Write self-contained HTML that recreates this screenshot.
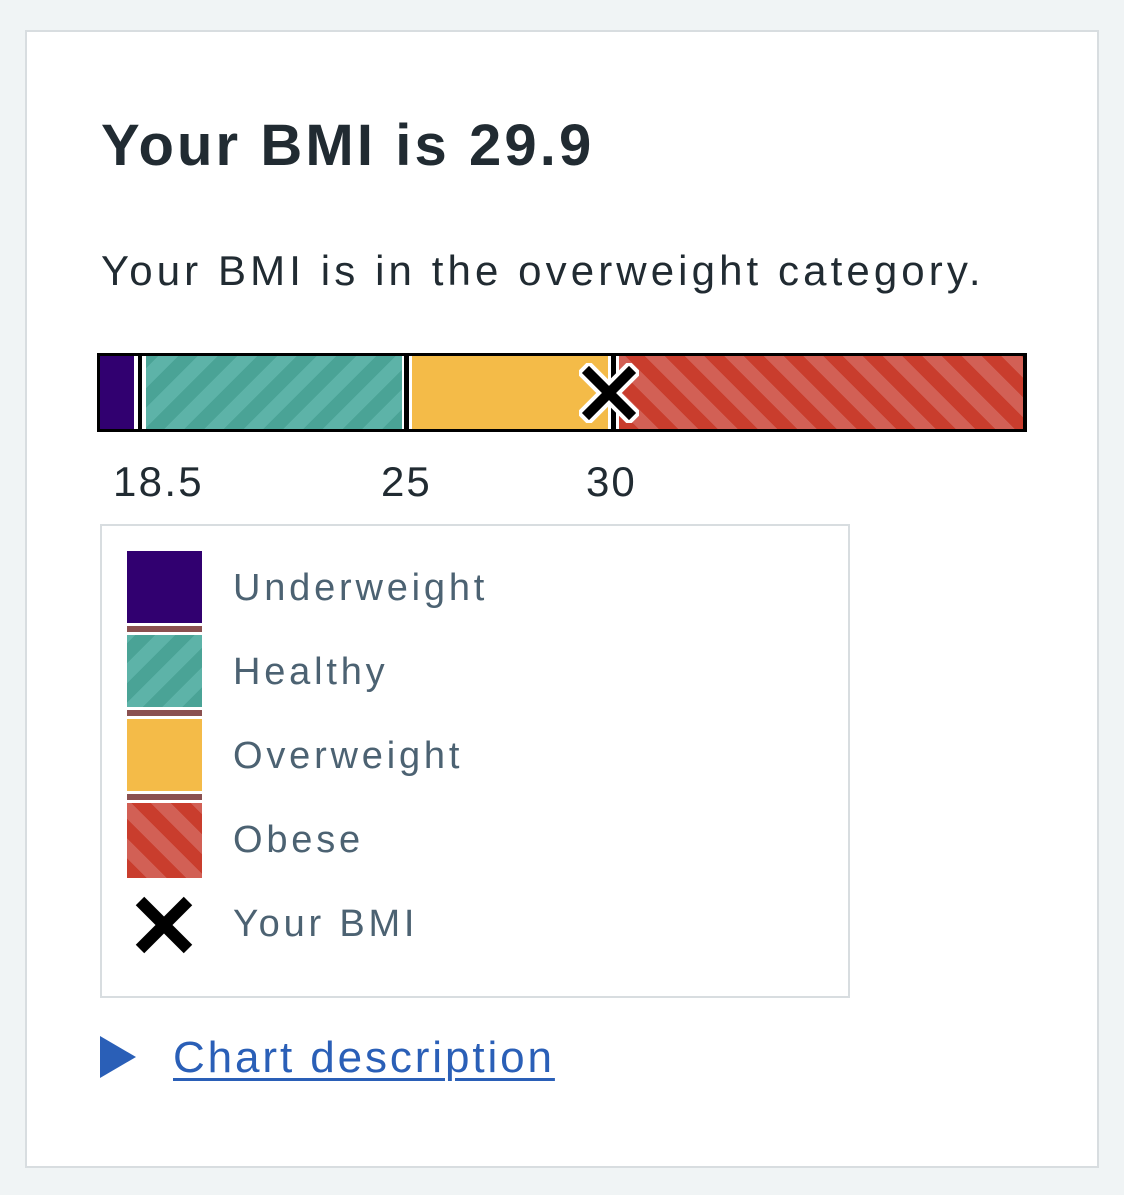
<!DOCTYPE html>
<html><head><meta charset="utf-8"><style>
body{margin:0;width:1124px;height:1195px;background:#f0f4f5;position:relative;font-family:"Liberation Sans",sans-serif;overflow:hidden}
.card{position:absolute;left:25px;top:30px;width:1070px;height:1134px;background:#fff;border:2px solid #d8dde0}
.a{position:absolute}
.teal{background:repeating-linear-gradient(-45deg,#4aa396 0 14px,#5db3a8 14px 28px)}
.red{background:repeating-linear-gradient(45deg,#c93d2d 0 14px,#d26055 14px 28px)}
.lbl{position:absolute;left:233px;font-size:38px;color:#4c6272;letter-spacing:3.8px}
.div{position:absolute;left:127px;width:75px;height:6px;background:#8a5050}
</style></head><body>
<div class="card"></div>
<div class="a" style="left:101px;top:112px;font-size:58px;font-weight:bold;color:#212b32;letter-spacing:3.1px">Your BMI is 29.9</div>
<div class="a" style="left:101px;top:247px;font-size:42px;color:#212b32;letter-spacing:4.1px">Your BMI is in the overweight category.</div>

<div class="a" style="left:97px;top:353px;width:930px;height:79px;background:#000"></div>
<div class="a" style="left:100px;top:356px;width:34px;height:73px;background:#310070"></div>
<div class="a" style="left:134px;top:356px;width:4px;height:73px;background:#fff"></div>
<div class="a" style="left:142px;top:356px;width:4px;height:73px;background:#fff"></div>
<div class="a teal" style="left:146px;top:356px;width:256px;height:73px"></div>
<div class="a" style="left:402px;top:356px;width:2px;height:73px;background:#fff"></div>
<div class="a" style="left:409px;top:356px;width:3px;height:73px;background:#fff"></div>
<div class="a" style="left:412px;top:356px;width:196px;height:73px;background:#f4bb48"></div>
<div class="a" style="left:608px;top:356px;width:3px;height:73px;background:#fff"></div>
<div class="a" style="left:616px;top:356px;width:3px;height:73px;background:#fff"></div>
<div class="a red" style="left:619px;top:356px;width:404px;height:73px"></div>
<svg class="a" style="left:579px;top:363px" width="60" height="60" viewBox="0 0 60 60">
<path d="M10 10 L50 50 M50 10 L10 50" stroke="#fff" stroke-width="18" stroke-linecap="square"/>
<path d="M10 10 L50 50 M50 10 L10 50" stroke="#000" stroke-width="10" stroke-linecap="square"/>
</svg>

<div class="a" style="left:113px;top:458px;font-size:42px;color:#212b32;letter-spacing:2.3px">18.5</div>
<div class="a" style="left:381px;top:458px;font-size:42px;color:#212b32;letter-spacing:2px">25</div>
<div class="a" style="left:586px;top:458px;font-size:42px;color:#212b32;letter-spacing:2px">30</div>

<div class="a" style="left:100px;top:524px;width:746px;height:470px;border:2px solid #d8dde0"></div>
<div class="a" style="left:127px;top:551px;width:75px;height:72px;background:#310070"></div>
<div class="div" style="top:626px"></div>
<div class="a teal" style="left:127px;top:635px;width:75px;height:72px"></div>
<div class="div" style="top:710px"></div>
<div class="a" style="left:127px;top:719px;width:75px;height:72px;background:#f4bb48"></div>
<div class="div" style="top:794px"></div>
<div class="a red" style="left:127px;top:803px;width:75px;height:75px"></div>
<svg class="a" style="left:132px;top:893px" width="64" height="64" viewBox="0 0 64 64">
<path d="M8 8 L56 56 M56 8 L8 56" stroke="#000" stroke-width="12"/>
</svg>
<div class="lbl" style="top:567px">Underweight</div>
<div class="lbl" style="top:651px">Healthy</div>
<div class="lbl" style="top:735px">Overweight</div>
<div class="lbl" style="top:819px">Obese</div>
<div class="lbl" style="top:903px">Your BMI</div>

<svg class="a" style="left:100px;top:1036px" width="36" height="42"><path d="M0 0 L36 21 L0 42Z" fill="#2a5fb7"/></svg>
<div class="a" style="left:173px;top:1033px;font-size:44px;color:#2a5fb7;letter-spacing:2.9px;text-decoration:underline;text-decoration-thickness:3px;text-underline-offset:6px">Chart description</div>
</body></html>
